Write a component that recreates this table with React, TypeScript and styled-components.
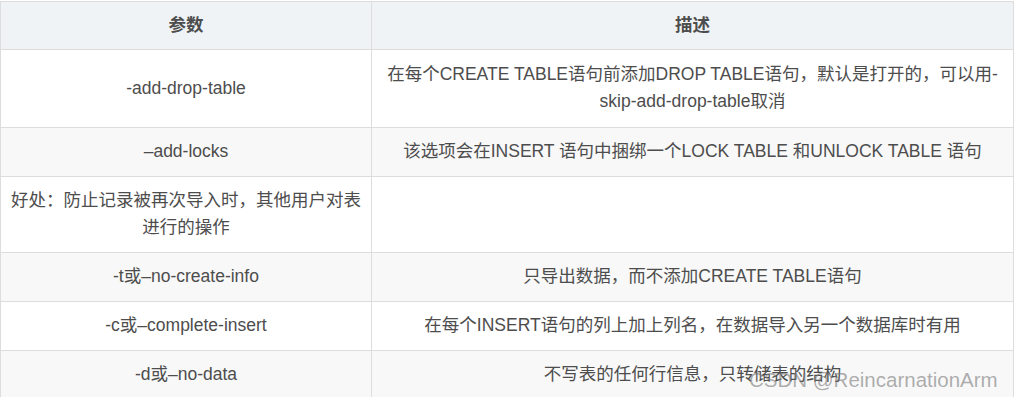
import React from 'react';
import styled, { createGlobalStyle } from 'styled-components';

const GlobalStyle = createGlobalStyle`
    body {
        margin: 0;
        padding-top: 1px;
        background: #fff;
        font-family: "Liberation Sans", "Noto Sans CJK SC", sans-serif;
    }
`

type Row = { param: string, desc: string }

const rows: Row[] = [
    { param: "-add-drop-table", desc: "在每个CREATE TABLE语句前添加DROP TABLE语句，默认是打开的，可以用-skip-add-drop-table取消" },
    { param: "–add-locks", desc: "该选项会在INSERT 语句中捆绑一个LOCK TABLE 和UNLOCK TABLE 语句" },
    { param: "好处：防止记录被再次导入时，其他用户对表进行的操作", desc: "" },
    { param: "-t或–no-create-info", desc: "只导出数据，而不添加CREATE TABLE语句" },
    { param: "-c或–complete-insert", desc: "在每个INSERT语句的列上加上列名，在数据导入另一个数据库时有用" },
    { param: "-d或–no-data", desc: "不写表的任何行信息，只转储表的结构" },
]

export default function App() {
    return (
        <>
            <GlobalStyle />
            <Page>
                <Table>
                    <colgroup>
                        <col style={{ width: 371 }} />
                        <col />
                    </colgroup>
                    <thead>
                        <tr>
                            <Th>参数</Th>
                            <Th>描述</Th>
                        </tr>
                    </thead>
                    <tbody>
                        {rows.map((row, idx) => (
                            <Tr $striped={idx % 2 === 1} $tall={idx === 0} key={idx}>
                                <Td>{row.param}</Td>
                                <Td>{row.desc}</Td>
                            </Tr>
                        ))}
                    </tbody>
                </Table>
                <Watermark>CSDN @ReincarnationArm</Watermark>
            </Page>
        </>
    )
}

const Page = styled.div`
    position: relative;
    width: 1014px;
`

const Table = styled.table`
    width: 1014px;
    table-layout: fixed;
    border-collapse: collapse;
    font-size: 17.5px;
    color: #4d4d4d;
`

const Th = styled.th`
    background: #eff3f5;
    border: 1px solid #dddddd;
    padding: 10px 8px;
    line-height: 27px;
    font-weight: bold;
    text-align: center;
`

const Tr = styled.tr<{ $striped: boolean, $tall: boolean }>`
    background: ${p => p.$striped ? "#f8f8f8" : "#ffffff"};
    height: ${p => p.$tall ? "78px" : "auto"};
`

const Td = styled.td`
    border: 1px solid #dddddd;
    padding: 10px 8px 11px;
    line-height: 27px;
    text-align: center;
    vertical-align: middle;
    word-break: break-word;
`

const Watermark = styled.div`
    position: absolute;
    left: 749px;
    top: 367px;
    font-size: 20.5px;
    color: rgba(120, 120, 120, 0.6);
    white-space: nowrap;
    pointer-events: none;
`
